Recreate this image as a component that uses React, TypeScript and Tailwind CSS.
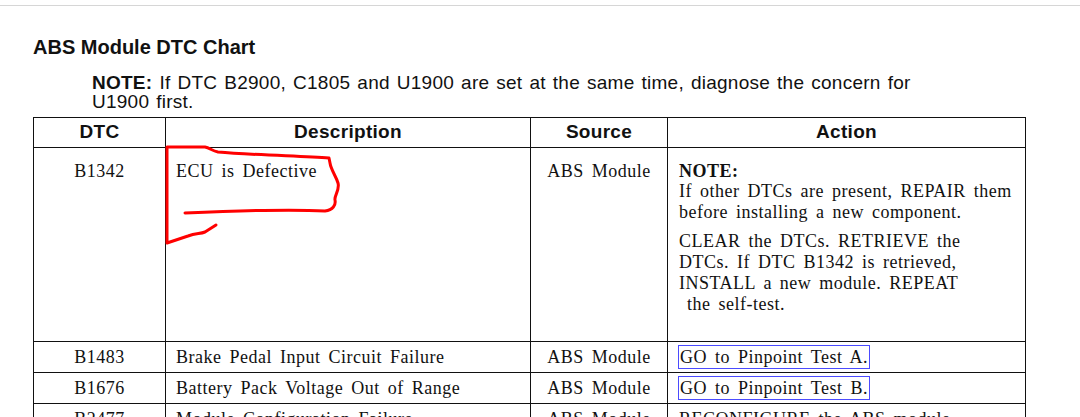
const serif = "font-['Liberation_Serif','Times_New_Roman',serif] tracking-[0.5px] [word-spacing:3px]";
const sans = "font-['Liberation_Sans',Arial,sans-serif]";

type Row = {
  dtc: string;
  description: string;
  source: string;
  action: React.ReactNode;
};

function LinkBox({ children }: { children: React.ReactNode }) {
  return <span className="border border-[#4b4bff] px-[1px] py-[1px]">{children}</span>;
}

const rows: Row[] = [
  {
    dtc: "B1483",
    description: "Brake Pedal Input Circuit Failure",
    source: "ABS Module",
    action: <LinkBox>GO to Pinpoint Test A.</LinkBox>,
  },
  {
    dtc: "B1676",
    description: "Battery Pack Voltage Out of Range",
    source: "ABS Module",
    action: <LinkBox>GO to Pinpoint Test B.</LinkBox>,
  },
];

export default function App() {
  const cell = "border border-[#111] text-[18px] leading-[21px] text-[#111]";
  const head = "border border-[#111] text-[19px] font-bold text-[#111] tracking-[0.3px]";
  return (
    <div className="relative w-[1080px] h-[417px] overflow-hidden bg-white">
      <div className="h-[5px]" />
      <div className="h-px bg-[#d6d6d6]" />

      <h2 className={`${sans} ml-[33px] mt-[30px] text-[20px] leading-[23px] font-bold text-[#111]`}>
        ABS Module DTC Chart
      </h2>

      <p
        className={`${sans} ml-[92px] mt-[14px] w-[900px] text-[19px] leading-[19px] tracking-[0.25px] [word-spacing:1.5px] text-[#111]`}
      >
        <span className="font-bold">NOTE:</span> If DTC B2900, C1805 and U1900 are set at the same time, diagnose the concern for
        <br />
        U1900 first.
      </p>

      <table className="ml-[33px] mt-[6px] border-collapse table-fixed w-[992px]">
        <colgroup>
          <col className="w-[132px]" />
          <col className="w-[365px]" />
          <col className="w-[137px]" />
          <col className="w-[358px]" />
        </colgroup>
        <thead>
          <tr className={`${sans} h-[30px]`}>
            <th className={head}>DTC</th>
            <th className={head}>Description</th>
            <th className={head}>Source</th>
            <th className={head}>Action</th>
          </tr>
        </thead>
        <tbody className={serif}>
          <tr className="h-[194px] align-top">
            <td className={`${cell} text-center pt-[13px]`}>B1342</td>
            <td className={`${cell} pl-[10px] pt-[13px]`}>ECU is Defective</td>
            <td className={`${cell} text-center pt-[13px]`}>ABS Module</td>
            <td className={`${cell} pl-[11px] pt-[14px]`}>
              <div className="font-bold leading-[19px]">NOTE:</div>
              <div>
                If other DTCs are present, REPAIR them
                <br />
                before installing a new component.
              </div>
              <div className="mt-[8px]">
                CLEAR the DTCs. RETRIEVE the
                <br />
                DTCs. If DTC B1342 is retrieved,
                <br />
                INSTALL a new module. REPEAT
                <br />
                &nbsp;the self-test.
              </div>
            </td>
          </tr>
          {rows.map((r) => (
            <tr key={r.dtc} className="h-[31px]">
              <td className={`${cell} text-center`}>{r.dtc}</td>
              <td className={`${cell} pl-[10px]`}>{r.description}</td>
              <td className={`${cell} text-center`}>{r.source}</td>
              <td className={`${cell} pl-[10px]`}>{r.action}</td>
            </tr>
          ))}
          <tr className="h-[31px]">
            <td className={`${cell} text-center`}>B2477</td>
            <td className={`${cell} pl-[10px]`}>Module Configuration Failure</td>
            <td className={`${cell} text-center`}>ABS Module</td>
            <td className={`${cell} pl-[11px]`}>RECONFIGURE the ABS module.</td>
          </tr>
        </tbody>
      </table>

      {/* red pen markup */}
      <svg className="absolute left-0 top-0 pointer-events-none" width="1080" height="417" viewBox="0 0 1080 417">
        <path
          d="M185 213 C 230 211, 290 209, 325 211 C 333 210, 336 205, 335 200 C 334 196, 340 190, 338 183 C 336 176, 331 170, 330 163 L 329 158 C 300 156, 250 155, 218 152 C 212 151, 210 148, 205 147 L 167 147 L 167 243 L 188 236 C 196 233, 200 234, 205 232 L 216 225"
          fill="none"
          stroke="#ff0000"
          strokeWidth="3"
          strokeLinecap="round"
          strokeLinejoin="round"
        />
      </svg>
    </div>
  );
}
